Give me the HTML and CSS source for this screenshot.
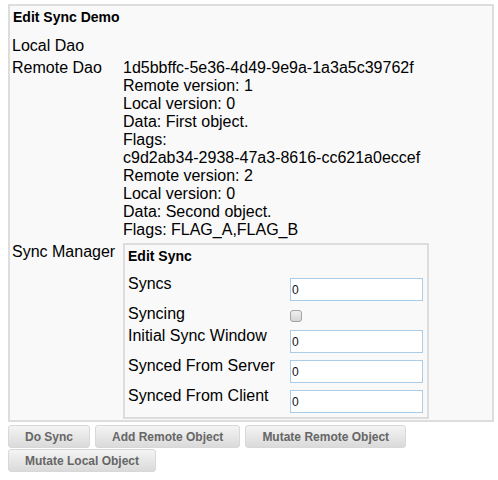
FILE: index.html
```html
<!DOCTYPE html>
<html>
<head>
<meta charset="utf-8">
<title>Edit Sync Demo</title>
<link rel="stylesheet" href="styles.css">
</head>
<body>
<div class="panel demo">
  <div class="panel-title">Edit Sync Demo</div>
  <div class="fields">
    <div class="label">Local Dao</div>
    <div class="value"></div>
    <div class="label">Remote Dao</div>
    <div class="value">
      <div>1d5bbffc-5e36-4d49-9e9a-1a3a5c39762f</div>
      <div>Remote version: 1</div>
      <div>Local version: 0</div>
      <div>Data: First object.</div>
      <div>Flags:</div>
      <div>c9d2ab34-2938-47a3-8616-cc621a0eccef</div>
      <div>Remote version: 2</div>
      <div>Local version: 0</div>
      <div>Data: Second object.</div>
      <div>Flags: FLAG_A,FLAG_B</div>
    </div>
    <div class="label">Sync Manager</div>
    <div class="value">
      <div class="panel sync">
        <div class="panel-title">Edit Sync</div>
        <div class="sync-grid">
          <div class="label">Syncs</div>
          <input class="field" type="text" value="0">
          <div class="label">Syncing</div>
          <input class="check" type="checkbox">
          <div class="label">Initial Sync Window</div>
          <input class="field" type="text" value="0">
          <div class="label">Synced From Server</div>
          <input class="field" type="text" value="0">
          <div class="label">Synced From Client</div>
          <input class="field" type="text" value="0">
        </div>
      </div>
    </div>
  </div>
</div>
<div class="buttons">
  <button class="btn">Do Sync</button>
  <button class="btn">Add Remote Object</button>
  <button class="btn">Mutate Remote Object</button>
  <button class="btn">Mutate Local Object</button>
</div>
</body>
</html>
```
FILE: styles.css
```css
body {
  margin: 0;
  padding: 4px 4px 0 8px;
  background: #fff;
  color: #000;
  font-family: "Liberation Sans", Arial, sans-serif;
}

.panel {
  box-sizing: border-box;
  border: 2px solid #dddddd;
  background: #f9f9f9;
}

.demo {
  width: 486px;
  padding: 3px 0 1px 0;
}

.panel-title {
  font-weight: bold;
  font-size: 14px;
  line-height: 16px;
  padding-left: 3px;
}

.demo > .panel-title {
  margin-bottom: 12px;
}

.fields {
  display: grid;
  grid-template-columns: 111px 1fr;
  row-gap: 4px;
  padding-left: 2px;
  font-size: 16px;
  line-height: 18px;
}

.sync {
  width: 306px;
  margin-top: 0;
  padding: 3px 4px 4px 3px;
}

.sync > .panel-title {
  padding-left: 0;
  margin-bottom: 11px;
}

.sync-grid {
  display: grid;
  grid-template-columns: 162px 133px;
  row-gap: 4px;
  align-items: start;
}

.field {
  display: block;
  box-sizing: border-box;
  width: 133px;
  height: 23px;
  margin: 3px 0 0 0;
  padding: 0 1px;
  border: 1px solid #a9cde8;
  border-radius: 0;
  background: #fff;
  color: #111;
  font-family: "Liberation Sans", Arial, sans-serif;
  font-size: 12px;
  outline: none;
}

.check {
  display: block;
  appearance: none;
  -webkit-appearance: none;
  box-sizing: border-box;
  width: 12px;
  height: 12px;
  margin: 5px 0 0 0;
  border: 1px solid #a3a3a3;
  border-radius: 3px;
  background: linear-gradient(#efefef, #d5d5d5);
}

.buttons {
  display: flex;
  flex-wrap: wrap;
  gap: 1px 5px;
  margin-top: 3px;
}

.btn {
  box-sizing: border-box;
  height: 23px;
  padding: 0 16px;
  border: 1px solid #d8d8d8;
  border-radius: 3px;
  background: linear-gradient(#f4f4f4, #dadada);
  color: #666;
  font-family: "Liberation Sans", Arial, sans-serif;
  font-weight: bold;
  font-size: 12px;
}
```
